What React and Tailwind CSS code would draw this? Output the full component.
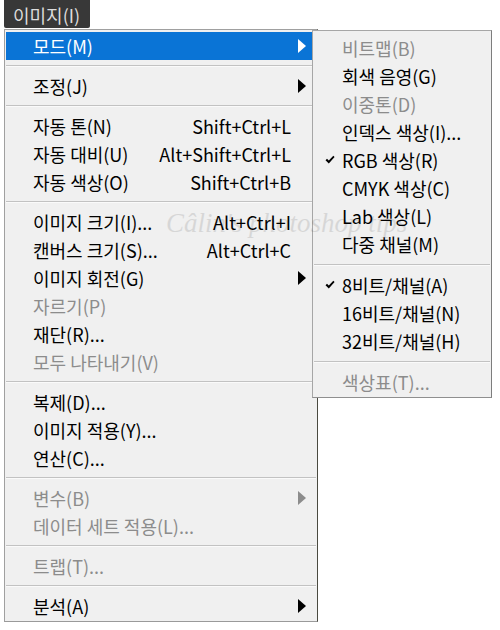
const main = [
  { label: "모드(M)", sub: true, active: true },
  "sep",
  { label: "조정(J)", sub: true },
  "sep",
  { label: "자동 톤(N)", key: "Shift+Ctrl+L" },
  { label: "자동 대비(U)", key: "Alt+Shift+Ctrl+L" },
  { label: "자동 색상(O)", key: "Shift+Ctrl+B" },
  "sep",
  { label: "이미지 크기(I)...", key: "Alt+Ctrl+I" },
  { label: "캔버스 크기(S)...", key: "Alt+Ctrl+C" },
  { label: "이미지 회전(G)", sub: true },
  { label: "자르기(P)", off: true },
  { label: "재단(R)..." },
  { label: "모두 나타내기(V)", off: true },
  "sep",
  { label: "복제(D)..." },
  { label: "이미지 적용(Y)..." },
  { label: "연산(C)..." },
  "sep",
  { label: "변수(B)", sub: true, off: true },
  { label: "데이터 세트 적용(L)...", off: true },
  "sep",
  { label: "트랩(T)...", off: true },
  "sep",
  { label: "분석(A)", sub: true },
];

const modes = [
  { label: "비트맵(B)", off: true },
  { label: "회색 음영(G)" },
  { label: "이중톤(D)", off: true },
  { label: "인덱스 색상(I)..." },
  { label: "RGB 색상(R)", check: true },
  { label: "CMYK 색상(C)" },
  { label: "Lab 색상(L)" },
  { label: "다중 채널(M)" },
  "sep",
  { label: "8비트/채널(A)", check: true },
  { label: "16비트/채널(N)" },
  { label: "32비트/채널(H)" },
  "sep",
  { label: "색상표(T)...", off: true },
];

function Arrow({ color }) {
  return (
    <svg width="8" height="14" viewBox="0 0 8 14">
      <path d="M0 0 L8 7 L0 14 Z" fill={color} />
    </svg>
  );
}

function Check() {
  return (
    <svg width="10" height="10" viewBox="0 0 10 10">
      <path d="M0.5 5.2 L2 3.8 L3.8 5.6 L8.3 0.8 L9.6 2 L3.8 8.4 Z" fill="#000" />
    </svg>
  );
}

function Sep({ h }) {
  return (
    <div className={`${h} flex items-center px-[1px]`}>
      <div className="w-full border-t border-b border-t-[#c2c2c2] border-b-[#fafafa]" />
    </div>
  );
}

export default function App() {
  return (
    <div
      className="relative w-[500px] h-[630px] bg-white overflow-hidden text-[18px]"
      style={{ fontFamily: '"Noto Sans CJK KR", "Noto Sans", sans-serif' }}
    >
      {/* tab */}
      <div className="ml-[4px] w-[86px] h-[28px] bg-[#383838] rounded-b-[2px] overflow-hidden">
        <div className="pl-[9px] pt-[5px] text-[18px] leading-[20px] text-[#dcdcdc]">이미지(I)</div>
      </div>

      {/* main menu */}
      <div className="ml-[4px] mt-[1px] w-[314px] bg-[#f0f0f0] border border-[#a0a0a0] border-r-[#4a4a40] border-b-[#9a9a9a] pt-[2px] pb-[1px]">
        {main.map((it, i) =>
          it === "sep" ? (
            <Sep key={i} h="h-[12px]" />
          ) : (
            <div
              key={i}
              className={`mx-[1px] h-[28px] flex items-center pl-[27px] pr-[10px] ${
                it.active ? "bg-[#0a74d6] text-white" : it.off ? "text-[#8c8c8c]" : "text-black"
              }`}
            >
              <span className="flex-1 whitespace-nowrap">{it.label}</span>
              {it.key && <span className="whitespace-nowrap">{it.key}</span>}
              <span className="w-[15px] flex justify-end">
                {it.sub && <Arrow color={it.active ? "#fff" : it.off ? "#8c8c8c" : "#000"} />}
              </span>
            </div>
          )
        )}
      </div>

      {/* mode submenu */}
      <div className="absolute left-[312px] top-[30px] w-[180px] bg-[#f0f0f0] border border-[#a6a6a6] border-r-[#7d7d7d] border-b-[#8f8f8f] pt-[3px] pb-[1px]">
        {modes.map((it, i) =>
          it === "sep" ? (
            <Sep key={i} h="h-[13px]" />
          ) : (
            <div
              key={i}
              className={`h-[28px] flex items-center pl-[12px] ${it.off ? "text-[#8c8c8c]" : "text-black"}`}
            >
              <span className="w-[17px] flex">{it.check && <Check />}</span>
              <span className="whitespace-nowrap">{it.label}</span>
            </div>
          )
        )}
      </div>

      {/* watermark */}
      <div
        className="absolute left-[166px] top-[203px] text-[27px] italic text-[#000] opacity-[0.1] pointer-events-none whitespace-nowrap"
        style={{ fontFamily: '"Liberation Serif", serif' }}
      >
        Câlin's photoshop tips
      </div>
    </div>
  );
}
